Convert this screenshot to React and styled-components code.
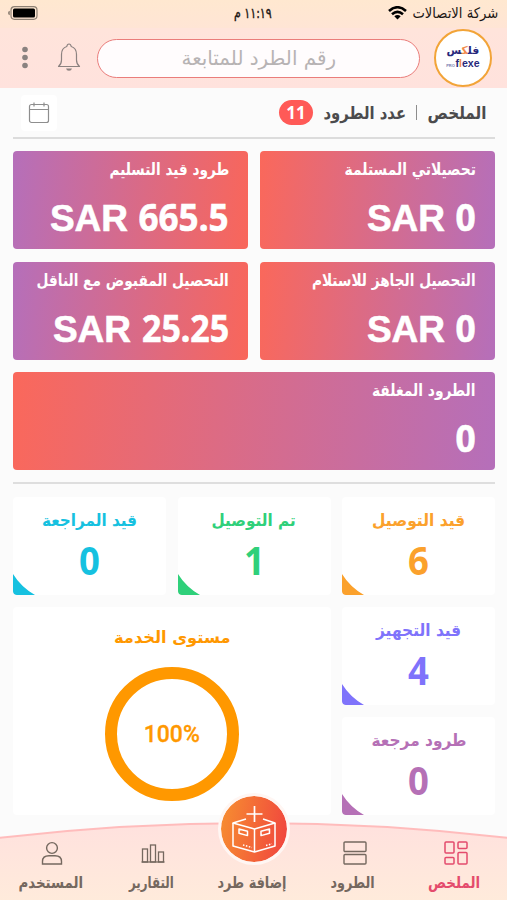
import React, { useLayoutEffect, useRef, useState } from 'react';
import styled, { createGlobalStyle } from 'styled-components'

const GlobalStyle = createGlobalStyle`
    *{ box-sizing:border-box; }
    body{
        margin:0;
        background-color:#fbfbfb;
        font-family:'DejaVu Sans','Noto Sans',sans-serif;
    }
`
const Screen = styled.div`
    direction:rtl;
    width:507px;
    height:900px;
    position:relative;
    overflow:hidden;
    background-color:#fbfbfb;
`
const StatusBar = styled.div`
    display:grid;
    grid-template-columns:1fr auto 1fr;
    align-items:center;
    height:28px;
    padding:0 9px 2px 8px;
    background:linear-gradient(#ffe8d0, #ffe5d5);
    color:#1b1614;
    font-size:14.5px;
    line-height:20px;
    >svg{ justify-self:end; }
`
const Clock = styled.div`
    -webkit-text-stroke:.4px #1b1614;
`
const Carrier = styled.div`
    display:flex;
    align-items:center;
    gap:5px;
`
const Header = styled.div`
    display:flex;
    align-items:center;
    height:60px;
    padding:0 15px 0 19px;
    background:linear-gradient(#ffe4db, #ffe2dd);
`
const Logo = styled.div`
    width:58px;
    height:58px;
    border-radius:50%;
    border:2px solid #f2a438;
    background-color:#fff;
    display:flex;
    flex-direction:column;
    align-items:center;
    justify-content:center;
    color:#27287c;
    font-weight:bold;
`
const LogoArabic = styled.div`
    height:12px;
    font-size:11px;
    line-height:11px;
    b{ color:#f28a4a; }
`
const LogoLatin = styled.div`
    direction:ltr;
    display:flex;
    align-items:baseline;
    gap:1px;
    font:bold 11px/13px 'Liberation Sans',sans-serif;
    b{ color:#f28a4a; }
    small{ font-size:4px; color:#7b7cae; }
`
const Search = styled.div`
    flex:1;
    display:flex;
    align-items:center;
    justify-content:center;
    height:39px;
    margin:0 14px 0 16px;
    border:1.5px solid #ea7d7b;
    border-radius:20px;
    background-color:#fffcfd;
    color:#b7b3b4;
    font-size:20px;
    line-height:30px;
`
const Tools = styled.div`
    display:flex;
    align-items:center;
    gap:26px;
`
const Summary = styled.div`
    display:flex;
    align-items:center;
    height:51px;
    margin:0 12px 0 13px;
    padding:0 9px 0 8px;
    border-bottom:2px solid #dcdcdc;
    color:#4b4b4d;
    font-size:17.5px;
    font-weight:bold;
`
const Divider = styled.i`
    width:1px;
    height:15px;
    margin:0 10px;
    background-color:#8d8d8d;
`
const Pill = styled.span`
    width:34px;
    height:25px;
    margin-right:10px;
    border-radius:13px;
    background-color:#ff5a57;
    color:#fff;
    text-align:center;
    font:bold 17px/25px 'Noto Sans',sans-serif;
`
const DateButton = styled.div`
    display:flex;
    align-items:center;
    justify-content:center;
    width:36px;
    height:36px;
    margin-right:auto;
    border-radius:4px;
    background-color:#fff;
`
const Money = styled.div`
    display:grid;
    grid-template-columns:235px 235px;
    grid-auto-rows:98px;
    gap:12.5px 12px;
    margin:12px 12px 0 13px;
    padding-bottom:12px;
    border-bottom:2px solid #dedede;
`
const MoneyCard = styled.div`
    grid-column:${p => p.$wide ? '1 / -1' : 'auto'};
    padding:9px 19px 0;
    border-radius:4px;
    background:${p => p.$flip
        ? 'linear-gradient(95deg, #b56fba, #f9665a)'
        : 'linear-gradient(95deg, #fa685b, #b56fba)'};
    color:#fff;
    font-size:16.5px;
    font-weight:bold;
`
const CardTitle = styled.div`
    height:20px;
    line-height:20px;
`
const Amount = styled.div`
    display:flex;
    direction:ltr;
    justify-content:flex-end;
    align-items:baseline;
    gap:11px;
    margin-top:13px;
    font:bold 37px/48px 'Liberation Sans',sans-serif;
    -webkit-text-stroke:.6px #fff;
`
const Stats = styled.div`
    display:grid;
    grid-template-columns:153px 153px 153px;
    grid-auto-rows:98px;
    gap:12px 11.5px;
    margin:13px 12px 0 13px;
`
const StatCard = styled.div`
    position:relative;
    display:flex;
    flex-direction:column;
    align-items:center;
    padding-top:14px;
    border-radius:4px;
    overflow:hidden;
    background-color:#fff;
    color:${p => p.$color};
    font-size:16.5px;
    font-weight:bold;
    >svg{
        position:absolute;
        left:0;
        bottom:0;
        fill:currentColor;
    }
`
const StatValue = styled.div`
    margin-top:3px;
    font:bold 40px/52px 'Noto Sans',sans-serif;
`
const Service = styled(StatCard)`
    grid-column:2 / 4;
    grid-row:2 / 4;
    padding-top:21px;
`
const Ring = styled.div`
    display:flex;
    align-items:center;
    justify-content:center;
    width:134px;
    height:134px;
    margin-top:19px;
    border:12px solid #ff9800;
    border-radius:50%;
    font:500 23px Roboto,sans-serif;
    -webkit-text-stroke:.3px #ff9800;
    direction:ltr;
`
const Nav = styled.div`
    position:absolute;
    left:0;
    right:0;
    bottom:0;
    height:82px;
`
const NavBack = styled.svg`
    position:absolute;
    inset:0;
`
const NavItems = styled.div`
    position:relative;
    display:grid;
    grid-template-columns:repeat(5, 1fr);
    padding:22px 3px 0 0;
`
const NavItem = styled.div`
    display:flex;
    flex-direction:column;
    align-items:center;
    color:${p => p.$active ? '#e44b6c' : '#75685f'};
    font-size:16px;
    font-weight:bold;
    line-height:20px;
    >svg{
        height:26px;
        margin-bottom:7px;
        transform:translateX(2px);
    }
`
const AddButton = styled.div`
    display:flex;
    align-items:center;
    justify-content:center;
    width:72px;
    height:72px;
    margin:-47px 0 8px;
    transform:translateX(2px);
    border:3px solid #fff6f3;
    border-radius:50%;
    background:linear-gradient(100deg, #f79030, #f0423f);
    background-clip:padding-box;
`
const FitBox = styled.span`
    display:inline-flex;
    justify-content:center;
    white-space:nowrap;
    flex:none;
`
const FitText = styled.span`
    flex:none;
    font-family:${p => p.$font || 'inherit'};
`

// stretches or squeezes a word so it takes exactly `w` pixels
function Fit({ w, font, children }) {
    const ref = useRef(null);
    const [scale, setScale] = useState(1);

    useLayoutEffect(() => {
        setScale(w / ref.current.offsetWidth);
    }, [w, children]);

    return (
        <FitBox style={{ width: w }}>
            <FitText ref={ref} $font={font} style={{ transform: `scaleX(${scale})` }}>{children}</FitText>
        </FitBox>
    )
}

const money = [
    { title: 'تحصيلاتي المستلمة', w: 131, value: '0', vw: 20, sar: true },
    { title: 'طرود قيد التسليم', w: 120, value: '665.5', vw: 90, sar: true, flip: true },
    { title: 'التحصيل الجاهز للاستلام', w: 164, value: '0', vw: 20, sar: true },
    { title: 'التحصيل المقبوض مع الناقل', w: 192, value: '25.25', vw: 87, sar: true, flip: true },
    { title: 'الطرود المغلقة', w: 104, value: '0', vw: 20, wide: true },
]

const stats = [
    { title: 'قيد التوصيل', w: 93, value: 6, color: '#fba12c' },
    { title: 'تم التوصيل', w: 84, value: 1, color: '#2fd07a' },
    { title: 'قيد المراجعة', w: 95, value: 0, color: '#16c1e0' },
    { title: 'قيد التجهيز', w: 85, value: 4, color: '#7f73fb' },
]

function Stat({ item }) {
    return (
        <StatCard $color={item.color}>
            <CardTitle><Fit w={item.w}>{item.title}</Fit></CardTitle>
            <StatValue><Fit w={21}>{item.value}</Fit></StatValue>
            <svg width="22" height="21" viewBox="0 0 22 21"><path d="M0 0Q8 13 22 21H3Q0 21 0 18Z" /></svg>
        </StatCard>
    )
}

const Battery = () => (
    <svg width="30" height="14" viewBox="0 0 30 14">
        <rect x="3" y=".7" width="26" height="12.6" rx="3.5" fill="none" stroke="#8d8074" strokeWidth="1.2" />
        <rect x="5" y="2.6" width="22" height="8.8" rx="1.5" fill="#000" />
        <path d="M1.8 4.8Q0 5.2 0 7T1.8 9.2Z" fill="#8d8074" />
    </svg>
)

const Wifi = () => (
    <svg width="19" height="14" viewBox="0 0 19 14" fill="none" stroke="#000" strokeWidth="2.6">
        <path d="M1 5Q9.500-2.500 18 5" />
        <path d="M4 8.200Q9.500 3.500 15 8.200" />
        <path d="M9.500 13.500L6.300 10.300Q9.500 7.800 12.700 10.300Z" fill="#000" stroke="none" />
    </svg>
)

const Bell = () => (
    <svg width="24" height="30" viewBox="0 0 24 30" fill="none" stroke="#8c8280" strokeWidth="1.2" strokeLinejoin="round">
        <path d="M1.500 23.500Q4.500 21 4.500 17V11.500Q4.500 5 9.800 3.500Q10.200 1 12 1T14.200 3.500Q19.500 5 19.500 11.500V17Q19.500 21 22.500 23.500Z" />
        <path d="M9 25.500H15Q14.500 27.700 12 27.700T9 25.500Z" fill="#8c8280" stroke="none" />
    </svg>
)

const Dots = () => (
    <svg width="12" height="24" viewBox="0 0 12 24" fill="#8a8280">
        <circle cx="6" cy="3.500" r="2.800" />
        <circle cx="6" cy="11.500" r="2.800" />
        <circle cx="6" cy="19.500" r="2.800" />
    </svg>
)

const Calendar = () => (
    <svg width="22" height="22" viewBox="0 0 22 22" fill="none" stroke="#8e8e8e" strokeWidth="1.200">
        <rect x="1.500" y="2.500" width="19" height="18" rx="2" />
        <path d="M1.500 7.500H20.500M6 .5V4.500M16 .5V4.500" />
    </svg>
)

const Box = () => (
    <svg width="48" height="52" viewBox="0 0 48 52" fill="none" stroke="#fff" strokeWidth="1.500" strokeLinejoin="round">
        <path d="M24.500 3V19M16.500 11H32.500" strokeWidth="1.700" />
        <path d="M16 16L3 20L24.500 26L45 20L33 16" />
        <path d="M3 20V43L24.500 49L45 43V20M24.500 26V49" />
        <path d="M9 26L17.500 28.300V32.600L9 30.300ZM31 28.300L39.500 26V30.300L31 32.600Z" />
        <path d="M13 42L22 44.500M36 42.500L42 40.800" strokeDasharray="1.500 1.500" />
    </svg>
)

export default function App() {
    return (
        <Screen>
            <GlobalStyle />
            <StatusBar>
                <Carrier>
                    <Fit w={86}>شركة الاتصالات</Fit>
                    <Wifi />
                </Carrier>
                <Clock><Fit w={38}>١١:١٩ م</Fit></Clock>
                <Battery />
            </StatusBar>
            <Header>
                <Logo>
                    <LogoArabic><Fit w={33}>فل<b>ك</b>س</Fit></LogoArabic>
                    <LogoLatin><small>PRO</small><Fit w={24}>f<b>l</b>exe</Fit></LogoLatin>
                </Logo>
                <Search><Fit w={155}>رقم الطرد للمتابعة</Fit></Search>
                <Tools>
                    <Bell />
                    <Dots />
                </Tools>
            </Header>
            <Summary>
                <Fit w={59}>الملخص</Fit>
                <Divider />
                <Fit w={83}>عدد الطرود</Fit>
                <Pill>11</Pill>
                <DateButton><Calendar /></DateButton>
            </Summary>
            <Money>
                {money.map(item => (
                    <MoneyCard key={item.title} $flip={item.flip} $wide={item.wide}>
                        <CardTitle><Fit w={item.w}>{item.title}</Fit></CardTitle>
                        <Amount>
                            {item.sar && <span>SAR</span>}
                            <Fit w={item.vw} font="'Noto Sans',sans-serif">{item.value}</Fit>
                        </Amount>
                    </MoneyCard>
                ))}
            </Money>
            <Stats>
                {stats.map(item => <Stat key={item.title} item={item} />)}
                <Service $color="#ff9800">
                    <CardTitle><Fit w={116}>مستوى الخدمة</Fit></CardTitle>
                    <Ring>100%</Ring>
                </Service>
                <Stat item={{ title: 'طرود مرجعة', w: 95, value: 0, color: '#b570b6' }} />
            </Stats>
            <Nav>
                <NavBack width="507" height="82" viewBox="0 0 507 82">
                    <defs>
                        <linearGradient id="nav" x1="0" y1="0" x2="0" y2="1">
                            <stop offset="0" stopColor="#ffe1de" />
                            <stop offset="1" stopColor="#ffebdb" />
                        </linearGradient>
                    </defs>
                    <path d="M-2 20Q253-10 509 20V84H-2Z" fill="url(#nav)" stroke="#ffbcbc" strokeWidth="2" />
                </NavBack>
                <NavItems>
                    <NavItem $active>
                        <svg width="26" viewBox="0 0 26 26" fill="none" stroke="currentColor" strokeWidth="1.500">
                            <rect x="2" y="2" width="9" height="11" rx="1" />
                            <rect x="15" y="2" width="9" height="6.500" rx="1" />
                            <rect x="2" y="17.500" width="9" height="6.500" rx="1" />
                            <rect x="15" y="12.500" width="9" height="11.500" rx="1" />
                        </svg>
                        <Fit w={52}>الملخص</Fit>
                    </NavItem>
                    <NavItem>
                        <svg width="26" viewBox="0 0 26 26" fill="none" stroke="currentColor" strokeWidth="1.400">
                            <rect x="2" y="2" width="22" height="9.500" rx="1" />
                            <rect x="2" y="14.500" width="22" height="9.500" rx="1" />
                        </svg>
                        <Fit w={44}>الطرود</Fit>
                    </NavItem>
                    <NavItem>
                        <AddButton><Box /></AddButton>
                        <Fit w={69}>إضافة طرد</Fit>
                    </NavItem>
                    <NavItem>
                        <svg width="26" viewBox="0 0 26 26" fill="none" stroke="currentColor" strokeWidth="1.300">
                            <rect x="2.500" y="9" width="5" height="13" />
                            <rect x="10.500" y="5" width="5" height="17" />
                            <rect x="18.500" y="12" width="5" height="10" />
                            <path d="M1.500 22H24.500" />
                        </svg>
                        <Fit w={45}>التقارير</Fit>
                    </NavItem>
                    <NavItem>
                        <svg width="26" viewBox="0 0 26 26" fill="none" stroke="currentColor" strokeWidth="1.400">
                            <circle cx="13" cy="8" r="5.400" />
                            <path d="M3.500 24V21.500Q3.500 15.800 10 15.800H16Q22.500 15.800 22.500 21.500V24Z" />
                        </svg>
                        <Fit w={65}>المستخدم</Fit>
                    </NavItem>
                </NavItems>
            </Nav>
        </Screen>
    )
}
